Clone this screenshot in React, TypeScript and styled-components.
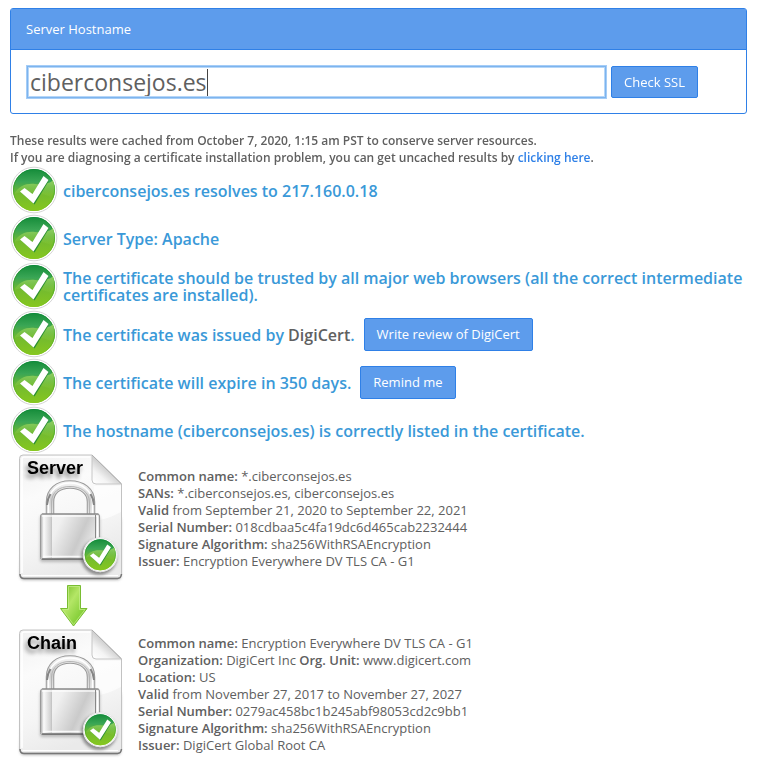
import React, { useId, useState } from "react";
import styled, { createGlobalStyle } from "styled-components";

const GlobalStyle = createGlobalStyle`
  body {
    margin: 0;
    background: #fff;
    color: #606060;
    font-family: "Open Sans", sans-serif;
    font-size: 13px;
    line-height: 17px;
  }
  *, *::before, *::after { box-sizing: border-box; }
`;

const Page = styled.main`
  padding: 8px 12px 8px 10px;
`;

const Panel = styled.form`
  border: 1px solid #2f80e7;
  border-radius: 3px;
  margin-bottom: 18px;
`;

const PanelHeading = styled.label`
  display: block;
  padding: 12px 15px 11px;
  background: #5d9cec;
  border-bottom: 1px solid #2f80e7;
  color: #fff;
`;

const PanelBody = styled.div`
  display: flex;
  align-items: center;
  gap: 5px;
  padding: 16px 48px 15px 16px;
`;

const HostField = styled.div`
  flex: 1;
  min-width: 0;
  display: flex;
  align-items: center;
  height: 32px;
  padding: 0 2px;
  border: 1px solid #7db4ee;
  box-shadow: 0 0 0 1px #a5cdf7, inset 0 0 0 1px #b5d6f8;
`;

const HostInput = styled.input`
  field-sizing: content;
  min-width: 0;
  max-width: 100%;
  height: 27px;
  margin: 0;
  padding: 0;
  border: 0;
  outline: 0;
  background: transparent;
  caret-color: transparent;
  color: #606060;
  font: 23px/27px "Open Sans", sans-serif;
`;

const Caret = styled.span`
  width: 1px;
  height: 27px;
  background: #444;
`;

const Button = styled.button<{ $tall?: boolean }>`
  height: ${(p) => (p.$tall ? 33 : 32)}px;
  padding: 0 12px;
  border: 1px solid #2f80e7;
  border-radius: 2px;
  background: #5d9cec;
  color: #fff;
  font: 13px/17px "Open Sans", sans-serif;
  white-space: nowrap;
  cursor: pointer;
`;

const Notice = styled.p`
  margin: 0;
  font-size: 12px;
  font-weight: 600;
`;

const Link = styled.a`
  color: #2f80e7;
  text-decoration: none;
`;

const CheckList = styled.ul`
  margin: 0;
  padding: 0;
  list-style: none;
`;

const CheckRow = styled.li`
  display: flex;
  align-items: center;
  gap: 5px;
  height: 48px;
  svg { flex: none; }
`;

const CheckText = styled.h3`
  margin: 0;
  padding-top: 2px;
  color: #3a99d8;
  font-size: 16px;
  font-weight: 600;
  line-height: 17px;
`;

const Issuer = styled.span`
  color: #606060;
`;

const Action = styled.div`
  margin-left: 4px;
`;

const CertRow = styled.section`
  display: flex;
  align-items: center;
  svg { flex: none; }
`;

const ArrowRow = styled.div`
  height: 45px;
  width: 128px;
  display: flex;
  justify-content: center;
`;

const Details = styled.div`
  b { font-weight: 600; }
`;

const CertLabel = styled.text`
  font: 700 18px "Liberation Sans", Arial, sans-serif;
  fill: #000;
  filter: drop-shadow(-2px 4px 2px rgba(0, 0, 0, 0.45));
`;

function CheckShapes({ id }: { id: string }) {
  return (
    <>
      <defs>
        <linearGradient id={`${id}g`} x1="0" y1="0" x2="0" y2="1">
          <stop offset="0" stopColor="#158c3a" />
          <stop offset=".3" stopColor="#3aa655" />
          <stop offset=".6" stopColor="#74bb2e" />
          <stop offset="1" stopColor="#86c71f" />
        </linearGradient>
        <linearGradient id={`${id}h`} x1="0" y1="0" x2="0" y2="1">
          <stop offset="0" stopColor="#b5e06a" stopOpacity=".75" />
          <stop offset="1" stopColor="#8acb3c" stopOpacity=".15" />
        </linearGradient>
        <linearGradient id={`${id}r`} x1="0" y1="0" x2="0" y2="1">
          <stop offset="0" stopColor="#0e8a3a" />
          <stop offset="1" stopColor="#86c71f" />
        </linearGradient>
      </defs>
      <circle cx="24" cy="24" r="22.8" fill="#fff" stroke="#d6d6d6" />
      <circle cx="24" cy="24" r="21" fill={`url(#${id}g)`} />
      <circle cx="24" cy="24" r="20.5" fill="none" stroke={`url(#${id}r)`} />
      <path d="M4.5 28C8 20 17 17 25 18C34 19 41 17 43 14C46 23 44 29 41 31C31 27 17 24 4.5 28Z" fill={`url(#${id}h)`} />
      <path d="M12 27L15 23L23.500 29L35 11.500L39 14.500L24.500 38.500Z" fill="#2b8f33" />
      <path d="M10 25.500L14.500 22L22.500 28L33.500 10L38.500 14L23.500 37.500Z" fill="#fff" />
    </>
  );
}

function CheckIcon() {
  const id = useId();
  return (
    <svg width="48" height="48" viewBox="0 0 48 48" aria-hidden="true">
      <CheckShapes id={id} />
    </svg>
  );
}

function CertIcon({ label }: { label: string }) {
  const id = useId();
  const u = (n: string) => `url(#${id}${n})`;
  return (
    <svg width="128" height="130" viewBox="0 0 128 130" role="img" aria-label={`${label} certificate`}>
      <defs>
        <linearGradient id={`${id}page`} x1="0" y1="0" x2=".35" y2="1">
          <stop offset="0" stopColor="#f0f0f0" />
          <stop offset=".35" stopColor="#fbfbfb" />
          <stop offset=".7" stopColor="#f5f5f5" />
          <stop offset="1" stopColor="#eaeaea" />
        </linearGradient>
        <linearGradient id={`${id}fold`} gradientUnits="userSpaceOnUse" x1="84" y1="30" x2="97" y2="15">
          <stop offset="0" stopColor="#fff" />
          <stop offset=".5" stopColor="#f4f4f4" />
          <stop offset="1" stopColor="#cfcfcf" />
        </linearGradient>
        <linearGradient id={`${id}body`} x1="0" y1="0" x2="1" y2=".35">
          <stop offset="0" stopColor="#f6f6f6" />
          <stop offset=".35" stopColor="#f0f0f0" />
          <stop offset=".75" stopColor="#cacaca" />
          <stop offset="1" stopColor="#eaeaea" />
        </linearGradient>
        <linearGradient id={`${id}side`} x1="0" y1="0" x2="1" y2="0">
          <stop offset="0" stopColor="#b4b4b4" />
          <stop offset=".25" stopColor="#fafafa" />
          <stop offset=".9" stopColor="#cfcfcf" />
          <stop offset="1" stopColor="#bdbdbd" />
        </linearGradient>
        <linearGradient id={`${id}metal`} x1="0" y1="0" x2="0" y2="1">
          <stop offset="0" stopColor="#f1f1f1" />
          <stop offset=".5" stopColor="#cccccc" />
          <stop offset="1" stopColor="#e4e4e4" />
        </linearGradient>
        <filter id={`${id}blur`} x="-30%" y="-30%" width="160%" height="180%">
          <feGaussianBlur stdDeviation="1.5" />
        </filter>
      </defs>
      <path d="M13 60H108L111 66V121Q111 126 107 126H14Q10 126 10 121Z" fill="#777" filter={u("blur")} opacity=".55" />
      <path d="M13 1H82L111.500 30V120Q111.500 124 107.500 124H13Q9.500 124 9.500 120V4.500Q9.500 1 13 1Z" fill={u("page")} stroke="#c2c2c2" />
      <path d="M10 120Q10 124.500 14 124.500H107.500Q111 124.500 111.500 120" fill="none" stroke="#777" strokeWidth="1.500" />
      <path d="M12 119V5Q12 3 14 3H80" fill="none" stroke="#fff" strokeWidth="1.500" />
      <path d="M12.500 121.500H108" stroke="#fff" />
      <path d="M84 32H111V58Q92 68 82 66Z" fill="#fff" opacity=".65" />
      <path d="M82 1V26Q82 30 86 30H111.500Z" fill={u("fold")} stroke="#c6c6c6" />
      <path d="M82 1L111.500 30" stroke="#b0b0b0" />

      <CertLabel x="17" y="20">{label}</CertLabel>

      <path d="M40 60V48C40 37 48 30.500 60 30.500S81 37 81 48V60" fill="none" stroke="#999" strokeWidth="8.500" />
      <path d="M40 60V48C40 37 48 30.500 60 30.500S81 37 81 48V60" fill="none" stroke={u("metal")} strokeWidth="6.500" />
      <path d="M38.500 60V48C39 37 48 29 60 29S82 37 82.500 48V60" fill="none" stroke="#fff" strokeWidth="1.500" />
      <path d="M41.500 60V48C42 38 49 32.500 60 32.500S79 38 79.500 48V60" fill="none" stroke="#b4b4b4" />
      <path d="M37 51C37.500 46 38.500 43 40.500 40M84 51C83.500 46 82.500 43 80.500 40" fill="none" stroke="#858585" strokeWidth="2" />

      <rect x="30" y="62" width="60" height="46" rx="2" fill="#777" filter={u("blur")} opacity=".45" />
      <rect x="30.500" y="60" width="59" height="45.500" rx="2" fill={u("body")} stroke="#999" />
      <rect x="31" y="61" width="11" height="43" fill={u("side")} />
      <path d="M32 60H88.500" stroke="#808080" />
      <path d="M32 62H88M33 102.500H88" stroke="#fff" strokeWidth="1.500" opacity=".85" />
      <path d="M32 105H89" stroke="#6c6c6c" strokeWidth="1.500" />
      <path d="M85.500 61V104" stroke="#888" />
      <path d="M87.500 62V104" stroke="#fff" strokeWidth="1.500" />

      <circle cx="89" cy="103" r="18" fill="#333" filter={u("blur")} opacity=".5" />
      <g transform="translate(72.500 83) scale(.74)">
        <circle cx="24" cy="24" r="23.500" fill="#fff" />
        <CheckShapes id={`${id}c`} />
      </g>
    </svg>
  );
}

function ArrowIcon() {
  const id = useId();
  return (
    <svg width="30" height="45" viewBox="0 0 30 45" aria-hidden="true">
      <defs>
        <linearGradient id={id} x1="0" y1="0" x2="1" y2="1">
          <stop offset="0" stopColor="#6fb822" />
          <stop offset=".4" stopColor="#b4e666" />
          <stop offset="1" stopColor="#61bd16" />
        </linearGradient>
      </defs>
      <path d="M8.500 1.500H21.500V24.500H28L14.500 42L1.500 24.500H8.500Z" fill={`url(#${id})`} stroke="#79bd32" />
      <path d="M9.500 2.500H20.500V25.500H26L14.500 40.500L3.500 25.500H9.500Z" fill="none" stroke="#c4ee8a" strokeOpacity=".75" />
    </svg>
  );
}

type Field = [label: string, value: string, label2?: string, value2?: string];

const serverFields: Field[] = [
  ["Common name:", "*.ciberconsejos.es"],
  ["SANs:", "*.ciberconsejos.es, ciberconsejos.es"],
  ["Valid", "from September 21, 2020 to September 22, 2021"],
  ["Serial Number:", "018cdbaa5c4fa19dc6d465cab2232444"],
  ["Signature Algorithm:", "sha256WithRSAEncryption"],
  ["Issuer:", "Encryption Everywhere DV TLS CA - G1"],
];

const chainFields: Field[] = [
  ["Common name:", "Encryption Everywhere DV TLS CA - G1"],
  ["Organization:", "DigiCert Inc", "Org. Unit:", "www.digicert.com"],
  ["Location:", "US"],
  ["Valid", "from November 27, 2017 to November 27, 2027"],
  ["Serial Number:", "0279ac458bc1b245abf98053cd2c9bb1"],
  ["Signature Algorithm:", "sha256WithRSAEncryption"],
  ["Issuer:", "DigiCert Global Root CA"],
];

function Certificate({ label, fields }: { label: string; fields: Field[] }) {
  return (
    <CertRow>
      <CertIcon label={label} />
      <Details>
        {fields.map(([name, value, name2, value2]) => (
          <div key={name}>
            <b>{name}</b> {value}
            {name2 && <> <b>{name2}</b> {value2}</>}
          </div>
        ))}
      </Details>
    </CertRow>
  );
}

function Check({ children, action }: { children: React.ReactNode; action?: string }) {
  return (
    <CheckRow>
      <CheckIcon />
      <CheckText>{children}</CheckText>
      {action && (
        <Action>
          <Button type="button" $tall>{action}</Button>
        </Action>
      )}
    </CheckRow>
  );
}

export default function App() {
  const [host, setHost] = useState("ciberconsejos.es");
  return (
    <>
      <GlobalStyle />
      <Page>
        <Panel onSubmit={(e) => e.preventDefault()}>
          <PanelHeading htmlFor="hostname">Server Hostname</PanelHeading>
          <PanelBody>
            <HostField>
              <HostInput
                id="hostname"
                type="text"
                value={host}
                onChange={(e) => setHost(e.target.value)}
                autoFocus
                spellCheck={false}
              />
              <Caret />
            </HostField>
            <Button type="submit">Check SSL</Button>
          </PanelBody>
        </Panel>
        <Notice>
          These results were cached from October 7, 2020, 1:15 am PST to conserve server resources.
          <br />
          If you are diagnosing a certificate installation problem, you can get uncached results by{" "}
          <Link href="#refresh">clicking here</Link>.
        </Notice>
        <CheckList>
          <Check>ciberconsejos.es resolves to 217.160.0.18</Check>
          <Check>Server Type: Apache</Check>
          <Check>
            The certificate should be trusted by all major web browsers (all the correct intermediate
            certificates are installed).
          </Check>
          <Check action="Write review of DigiCert">
            The certificate was issued by <Issuer>DigiCert</Issuer>.
          </Check>
          <Check action="Remind me">The certificate will expire in 350 days.</Check>
          <Check>The hostname (ciberconsejos.es) is correctly listed in the certificate.</Check>
        </CheckList>
        <Certificate label="Server" fields={serverFields} />
        <ArrowRow>
          <ArrowIcon />
        </ArrowRow>
        <Certificate label="Chain" fields={chainFields} />
      </Page>
    </>
  );
}
